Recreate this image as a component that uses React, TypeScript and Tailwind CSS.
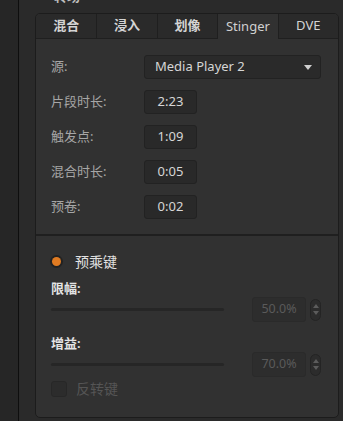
const font = { fontFamily: '"Noto Sans", "Noto Sans CJK SC", sans-serif' };

const tabs = ['混合', '浸入', '划像', 'Stinger', 'DVE'];

const fields = [
  { label: '片段时长:', value: '2:23' },
  { label: '触发点:', value: '1:09' },
  { label: '混合时长:', value: '0:05' },
  { label: '预卷:', value: '0:02' },
];

function Spinner() {
  return (
    <div className="flex h-[22px] w-[11px] flex-col items-center justify-center gap-[3px] rounded-full border border-[#242424] bg-[#2c2c2c]">
      <span className="h-0 w-0 border-x-[3px] border-b-[4px] border-x-transparent border-b-[#5c5c5c]" />
      <span className="h-0 w-0 border-x-[3px] border-t-[4px] border-x-transparent border-t-[#5c5c5c]" />
    </div>
  );
}

function SliderRow({ label, value }: { label: string; value: string }) {
  return (
    <div>
      <div className="text-[13px] leading-[18px] font-semibold text-[#e4e4e4]">{label}</div>
      <div className="flex items-center">
        <div className="h-[3px] w-[173px] rounded-full bg-[#262626]" />
        <div className="ml-[28px] flex h-[25px] w-[54px] items-center justify-center rounded-[3px] border border-[#2a2a2a] bg-[#2d2d2d] text-[12.5px] text-[#5a5a5a]">
          {value}
        </div>
        <div className="ml-[4px]">
          <Spinner />
        </div>
      </div>
    </div>
  );
}

export default function App() {
  return (
    <div className="flex h-[421px] w-[343px] overflow-hidden bg-[#2a2a2a]" style={font}>
      <div className="w-[19px] shrink-0 border-r border-[#0e0e0e] bg-[#262626]" />
      <div className="flex-1 pl-[16px] pr-[4px]">
        <div className="relative h-[13px] overflow-hidden">
          <span className="absolute -top-[13px] left-[19px] text-[13px] font-semibold text-[#bdbdbd]">转场</span>
        </div>
        <div className="flex h-[405px] flex-col overflow-hidden rounded-[5px] border border-[#1c1c1c] bg-[#313131]">
          <div className="grid h-[25px] grid-cols-5">
            {tabs.map((t, i) => {
              const active = t === 'Stinger';
              const latin = /[A-Za-z]/.test(t);
              return (
                <div
                  key={t}
                  className={`flex items-center justify-center text-[13px] ${
                    i > 0 ? 'border-l border-[#1f1f1f]' : ''
                  } ${latin ? 'font-normal' : 'font-bold'} ${
                    active
                      ? 'bg-[#313131] text-[#d0d0d0]'
                      : 'border-b border-[#1f1f1f] bg-[#2a2a2a] text-[#d4d4d4]'
                  }`}
                >
                  {t}
                </div>
              );
            })}
          </div>

          <div className="flex flex-col gap-[11px] px-[15px] pt-[16px] pb-[15px]">
            <div className="flex items-center">
              <span className="w-[93px] text-[13px] text-[#a6a6a6]">源:</span>
              <div className="flex h-[24px] w-[177px] items-center justify-between rounded-[3px] border border-[#222] bg-[#2a2a2a] pl-[10px] pr-[8px] text-[13px] text-[#d6d6d6]">
                Media Player 2
                <span className="h-0 w-0 border-x-[4px] border-t-[5px] border-x-transparent border-t-[#cfcfcf]" />
              </div>
            </div>
            {fields.map((f) => (
              <div key={f.label} className="flex items-center">
                <span className="w-[93px] text-[13px] text-[#a6a6a6]">{f.label}</span>
                <div className="flex h-[24px] w-[53px] items-center justify-center rounded-[3px] border border-[#222] bg-[#292929] text-[13px] text-[#d6d6d6]">
                  {f.value}
                </div>
              </div>
            ))}
          </div>

          <div className="h-[2px] bg-[#1f1f1f]" />

          <div className="flex flex-col px-[15px] pt-[15px]">
            <div className="flex items-center">
              <span className="ml-[1px] h-[9px] w-[9px] rounded-full bg-[#e07b22] ring-2 ring-[#222]" />
              <span className="ml-[14px] text-[14px] text-[#e2e2e2]">预乘键</span>
            </div>
            <div className="mt-[7px] flex flex-col gap-[12px]">
              <SliderRow label="限幅:" value="50.0%" />
              <SliderRow label="增益:" value="70.0%" />
            </div>
            <div className="mt-[1px] flex items-center">
              <span className="h-[16px] w-[16px] rounded-[3px] border border-[#272727] bg-[#2c2c2c]" />
              <span className="ml-[9px] text-[14px] text-[#555]">反转键</span>
            </div>
          </div>
        </div>
      </div>
    </div>
  );
}
